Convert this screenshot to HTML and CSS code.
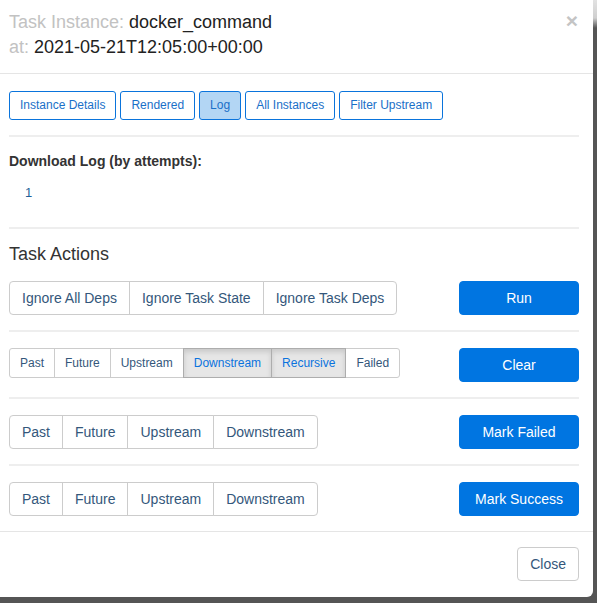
FILE: index.html
```html
<!DOCTYPE html>
<html>
<head>
<meta charset="utf-8">
<link rel="stylesheet" href="styles.css">
</head>
<body>
<div class="modal">
  <div class="modal-header">
    <h4 class="modal-title">
      <span class="muted">Task Instance:</span> docker_command<br>
      <span class="muted">at:</span> 2021-05-21T12:05:00+00:00
    </h4>
    <span class="close">×</span>
  </div>
  <div class="modal-body">
    <div class="nav">
      <span class="btn-nav">Instance Details</span>
      <span class="btn-nav">Rendered</span>
      <span class="btn-nav active">Log</span>
      <span class="btn-nav">All Instances</span>
      <span class="btn-nav">Filter Upstream</span>
    </div>
    <hr class="rule rule-nav">
    <div class="log-title">Download Log (by attempts):</div>
    <div class="attempts"><a class="attempt">1</a></div>
    <hr class="rule rule-log">
    <h4 class="section-title">Task Actions</h4>
    <div class="action-row first">
      <div class="btn-group">
        <span class="btn">Ignore All Deps</span>
        <span class="btn">Ignore Task State</span>
        <span class="btn">Ignore Task Deps</span>
      </div>
      <span class="btn-primary">Run</span>
    </div>
    <hr class="rule">
    <div class="action-row">
      <div class="btn-group small">
        <span class="btn">Past</span>
        <span class="btn">Future</span>
        <span class="btn">Upstream</span>
        <span class="btn active">Downstream</span>
        <span class="btn active">Recursive</span>
        <span class="btn">Failed</span>
      </div>
      <span class="btn-primary">Clear</span>
    </div>
    <hr class="rule">
    <div class="action-row">
      <div class="btn-group">
        <span class="btn">Past</span>
        <span class="btn">Future</span>
        <span class="btn">Upstream</span>
        <span class="btn">Downstream</span>
      </div>
      <span class="btn-primary">Mark Failed</span>
    </div>
    <hr class="rule">
    <div class="action-row">
      <div class="btn-group">
        <span class="btn">Past</span>
        <span class="btn">Future</span>
        <span class="btn">Upstream</span>
        <span class="btn">Downstream</span>
      </div>
      <span class="btn-primary">Mark Success</span>
    </div>
  </div>
  <div class="modal-footer">
    <span class="btn btn-close">Close</span>
  </div>
</div>
</body>
</html>
```
FILE: styles.css
```css
html, body {
  margin: 0;
  padding: 0;
}
body {
  width: 597px;
  height: 603px;
  overflow: hidden;
  background: linear-gradient(to bottom, #e2e2e2 0, #cfcfcf 18px, #555555 28px, #555555 100%);
  font-family: "Liberation Sans", Arial, sans-serif;
  color: #333333;
  font-size: 14px;
}
.modal {
  width: 593px;
  height: 597px;
  background: #ffffff;
  border-bottom-right-radius: 6px;
  display: flex;
  flex-direction: column;
}
.modal-header {
  display: flex;
  justify-content: space-between;
  align-items: flex-start;
  padding: 10px 14px 13px 9px;
  border-bottom: 1px solid #e5e5e5;
}
.modal-title {
  margin: 0;
  font-size: 18px;
  font-weight: normal;
  line-height: 25px;
  color: #222222;
}
.muted {
  color: #c2c2c2;
}
.close {
  font-size: 21px;
  font-weight: bold;
  line-height: 21px;
  color: #c4c4c4;
  margin-top: 0;
  margin-right: 1px;
}
.modal-body {
  padding: 17px 14px 15px 9px;
}
.nav {
  display: flex;
  gap: 4px;
}
.btn-nav {
  display: block;
  font-size: 12px;
  line-height: 17px;
  padding: 5px 10px;
  border: 1px solid #0a74dc;
  border-radius: 3px;
  color: #1a70c8;
  background: #ffffff;
}
.btn-nav.active {
  background: #b3d6f4;
}
.rule {
  border: 0;
  height: 2px;
  background: #eeeeee;
  margin: 15px 0 16px;
}
.rule-nav {
  margin: 15px 0 0;
}
.log-title {
  margin-top: 14px;
  font-weight: bold;
  font-size: 14px;
  line-height: 20px;
}
.attempts {
  margin-top: 11px;
  padding-left: 16px;
  line-height: 20px;
}
.attempt {
  color: #1f5f99;
  font-size: 13px;
}
.rule-log {
  margin: 24px 0 0;
}
.section-title {
  margin: 12px 0 0;
  font-size: 18px;
  font-weight: normal;
  line-height: 26px;
  color: #333333;
}
.action-row {
  display: flex;
  justify-content: space-between;
  align-items: flex-start;
}
.action-row.first {
  margin-top: 14px;
}
.btn-group {
  display: flex;
}
.btn {
  display: block;
  font-size: 14px;
  line-height: 20px;
  padding: 6px 12px;
  border: 1px solid #cccccc;
  background: #ffffff;
  color: #34577b;
}
.btn-group .btn + .btn {
  margin-left: -1px;
}
.btn-group .btn:first-child {
  border-radius: 4px 0 0 4px;
}
.btn-group .btn:last-child {
  border-radius: 0 4px 4px 0;
}
.btn-group.small .btn {
  font-size: 12px;
  line-height: 18px;
  padding: 5px 10px;
}
.btn-group.small .btn:first-child {
  border-radius: 3px 0 0 3px;
}
.btn-group.small .btn:last-child {
  border-radius: 0 3px 3px 0;
}
.btn.active {
  background: #e6e6e6;
  border-color: #adadad;
  color: #0a73de;
  box-shadow: inset 0 3px 5px rgba(0, 0, 0, 0.125);
  position: relative;
}
.btn-primary {
  display: block;
  width: 118px;
  text-align: center;
  font-size: 14px;
  line-height: 20px;
  padding: 6px 0;
  border: 1px solid #0075e1;
  border-radius: 4px;
  background: #0075e1;
  color: #ffffff;
}
.modal-footer {
  display: flex;
  justify-content: flex-end;
  padding: 15px 14px 16px;
  border-top: 1px solid #e5e5e5;
}
.btn-close {
  border-radius: 4px;
}
```
